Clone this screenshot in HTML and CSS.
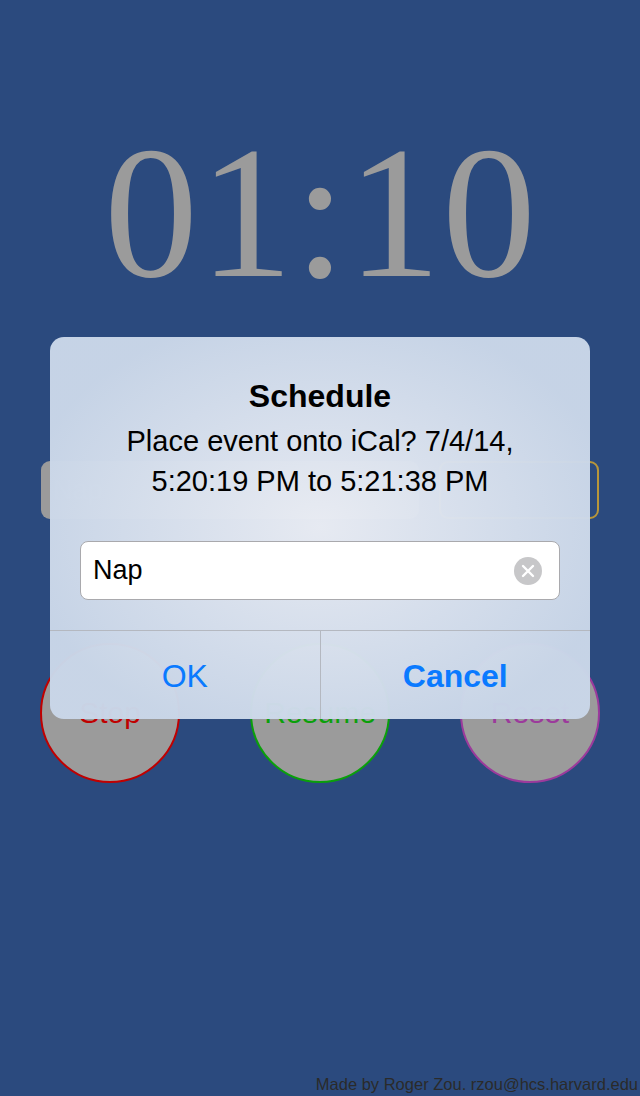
FILE: index.html
```html
<!DOCTYPE html>
<html>
<head>
<meta charset="utf-8">
<link rel="stylesheet" href="styles.css">
</head>
<body>
<div class="screen">
  <div class="timer">01:10</div>
  <div class="field-row">
    <div class="bg-field">Nap</div>
    <div class="bg-button"></div>
  </div>
  <div class="circles">
    <div class="circle stop">Stop</div>
    <div class="circle resume">Resume</div>
    <div class="circle reset">Reset</div>
  </div>
  <div class="spacer"></div>
  <div class="footer">Made by Roger Zou. rzou@hcs.harvard.edu</div>

  <div class="alert">
    <div class="alert-body">
      <div class="alert-title">Schedule</div>
      <div class="alert-msg">Place event onto iCal? 7/4/14,<br>5:20:19 PM to 5:21:38 PM</div>
      <div class="alert-input">
        <span class="input-text">Nap</span>
        <svg class="clear" width="28" height="28" viewBox="0 0 28 28">
          <circle cx="14" cy="14" r="14" fill="#c7c7c9"/>
          <path d="M9 9 L19 19 M19 9 L9 19" stroke="#fff" stroke-width="2.4" stroke-linecap="round"/>
        </svg>
      </div>
    </div>
    <div class="alert-buttons">
      <div class="alert-btn">OK</div>
      <div class="alert-btn bold">Cancel</div>
    </div>
  </div>
</div>
</body>
</html>
```
FILE: styles.css
```css
html, body {
  margin: 0;
  padding: 0;
}
body {
  background: #2b4a7e;
  font-family: "Liberation Sans", Arial, sans-serif;
}
.screen {
  position: relative;
  width: 640px;
  height: 1096px;
  display: flex;
  flex-direction: column;
  overflow: hidden;
}
.timer {
  margin-top: 119px;
  font-family: "Liberation Serif", "Times New Roman", serif;
  font-size: 188px;
  line-height: 188px;
  height: 188px;
  letter-spacing: 1px;
  text-indent: 1px;
  color: #9b9b9b;
  text-align: center;
}
.field-row {
  margin-top: 154px;
  padding: 0 41px;
  height: 58px;
  display: flex;
  gap: 20px;
}
.bg-field {
  flex: 1;
  background: #9b9b9b;
  border-radius: 9px;
  color: #b5b5b5;
  font-size: 27px;
  line-height: 58px;
  padding-left: 12px;
}
.bg-button {
  width: 156px;
  border: 2px solid #b8963a;
  border-radius: 9px;
}
.circles {
  margin-top: 124px;
  padding: 0 40px;
  display: flex;
  justify-content: space-between;
}
.circle {
  width: 136px;
  height: 136px;
  border-radius: 50%;
  background: #9b9b9b;
  border: 2px solid;
  display: flex;
  align-items: center;
  justify-content: center;
  font-size: 30px;
}
.stop { border-color: #c00000; color: #c00000; }
.resume { border-color: #0aa00a; color: #0aa00a; }
.reset { border-color: #9c3a9c; color: #9c3a9c; }
.spacer { flex: 1; }
.footer {
  text-align: right;
  padding-right: 2px;
  font-size: 16.5px;
  line-height: 20px;
  margin-bottom: 2px;
  color: #2a2a2a;
}
.alert {
  position: absolute;
  left: 50px;
  top: 337px;
  width: 540px;
  border-radius: 14px;
  overflow: hidden;
  background: radial-gradient(ellipse 300px 220px at 270px 190px, rgba(234,237,244,0.98), rgba(201,214,232,0.98));
}
.alert-body {
  padding: 39px 30px 30px;
  display: flex;
  flex-direction: column;
  align-items: stretch;
}
.alert-title {
  text-align: center;
  font-weight: bold;
  font-size: 32px;
  line-height: 40px;
  color: #000;
}
.alert-msg {
  margin-top: 5px;
  text-align: center;
  font-size: 29px;
  line-height: 40px;
  color: #000;
}
.alert-input {
  margin-top: 40px;
  height: 57px;
  background: #fff;
  border: 1px solid #a9a9ad;
  border-radius: 8px;
  display: flex;
  align-items: center;
  padding: 0 17px 0 12px;
}
.input-text {
  flex: 1;
  font-size: 27px;
  color: #000;
}
.clear { display: block; }
.alert-buttons {
  display: flex;
  border-top: 1px solid #b4b8c0;
  height: 88px;
}
.alert-btn {
  flex: 1;
  display: flex;
  align-items: center;
  justify-content: center;
  font-size: 32px;
  color: #0a7aff;
  padding-top: 3px;
}
.alert-btn + .alert-btn {
  border-left: 1px solid #b4b8c0;
}
.bold { font-weight: bold; }
```
